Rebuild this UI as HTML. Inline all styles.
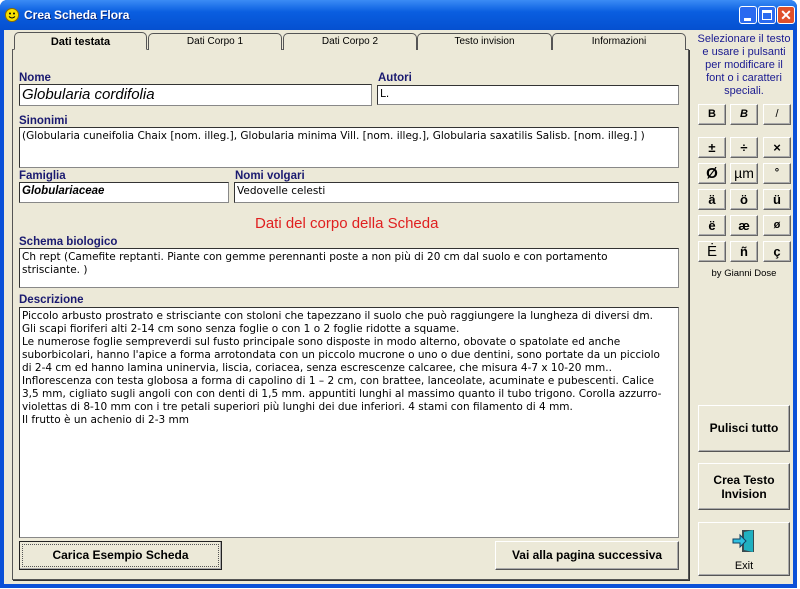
<!DOCTYPE html>
<html><head><meta charset="utf-8"><style>
*{box-sizing:border-box;margin:0;padding:0}
body{width:800px;height:589px;overflow:hidden;background:#fff;font-family:"Liberation Sans",sans-serif;position:relative}
.win{position:absolute;left:0;top:0;width:797px;height:588px;background:#0a50d8;border-radius:7px 7px 0 0}
.title{position:absolute;left:0;top:0;width:797px;height:30px;background:linear-gradient(#3b8cf5,#0a5ee0 40%,#0550d0);border-radius:7px 7px 0 0}
.title span{position:absolute;left:24px;top:8px;color:#fff;font-weight:bold;font-size:12px;text-shadow:1px 1px #0a2a80}
.client{position:absolute;left:4px;top:30px;width:789px;height:554px;background:#ece9d8}
.a{position:absolute}
.tb{position:absolute;background:#fff;border:1px solid #333;border-right-color:#888;border-bottom-color:#888;font-family:"DejaVu Sans",sans-serif;font-size:10.5px;color:#000;padding:2px 2px;white-space:nowrap;overflow:hidden}
.lb{position:absolute;font-weight:bold;font-size:11.5px;color:#1a1a70}
.tab{position:absolute;top:33px;height:17px;border:1px solid #555;border-bottom:none;border-radius:5px 5px 0 0;background:#ece9d8;font-size:10px;text-align:center;line-height:15px;color:#000}
.btn{position:absolute;background:#ece9d8;border:1px solid;border-color:#fff #555 #555 #fff;box-shadow:inset -1px -1px #aaa;font-size:12px;font-weight:bold;text-align:center;color:#000}
.sb{position:absolute;width:28px;height:21px;background:#ece9d8;border:1px solid;border-color:#fff #666 #666 #fff;box-shadow:inset -1px -1px #aaa;font-weight:bold;font-size:13px;text-align:center;line-height:19px}
</style></head><body>
<div class="win"></div>
<div class="title">
<svg class="a" style="left:5px;top:8px" width="14" height="14"><circle cx="7" cy="7" r="6.5" fill="#f6e000" stroke="#8a6a00"/><circle cx="5" cy="5.5" r="1" fill="#000"/><circle cx="9" cy="5.5" r="1" fill="#000"/><path d="M4 8.5 Q7 11.5 10 8.5" stroke="#000" fill="none"/></svg>
<span>Crea Scheda Flora</span>
<div class="a" style="left:739px;top:6px;width:18px;height:18px;background:#2a6af0;border:1px solid #fff;border-radius:3px"><div class="a" style="left:4px;top:11px;width:7px;height:3px;background:#fff"></div></div>
<div class="a" style="left:758px;top:6px;width:18px;height:18px;background:#2a6af0;border:1px solid #fff;border-radius:3px"><div class="a" style="left:3px;top:3px;width:10px;height:10px;border:1px solid #fff;border-top-width:3px"></div></div>
<div class="a" style="left:777px;top:6px;width:18px;height:18px;background:#e0502a;border:1px solid #fff;border-radius:3px;color:#fff;font-weight:bold;font-size:14px;text-align:center;line-height:16px">✕</div>
</div>
<div class="client"></div>
<div class="a" style="left:12px;top:49px;width:677px;height:531px;border:1px solid #555;border-top-color:#666;background:#ece9d8;box-shadow:1px 1px #333"></div>
<div class="tab" style="left:14px;width:133px;top:32px;height:18px;font-weight:bold;font-size:11px;line-height:18px;border-bottom:1px solid #ece9d8">Dati testata</div>
<div class="tab" style="left:148px;width:134px">Dati Corpo 1</div>
<div class="tab" style="left:283px;width:134px">Dati Corpo 2</div>
<div class="tab" style="left:417px;width:135px">Testo invision</div>
<div class="tab" style="left:552px;width:134px">Informazioni</div>

<div class="lb" style="left:19px;top:72px">Nome</div>
<div class="tb" style="left:19px;top:84px;width:353px;height:22px;font-family:'Liberation Sans',sans-serif;font-style:italic;font-size:15px;padding:1px 2px">Globularia cordifolia</div>
<div class="lb" style="left:378px;top:72px">Autori</div>
<div class="tb" style="left:377px;top:85px;width:302px;height:20px">L.</div>
<div class="lb" style="left:19px;top:115px">Sinonimi</div>
<div class="tb" style="left:19px;top:127px;width:660px;height:41px">(Globularia cuneifolia Chaix [nom. illeg.], Globularia minima Vill. [nom. illeg.], Globularia saxatilis Salisb. [nom. illeg.] )</div>
<div class="lb" style="left:19px;top:170px">Famiglia</div>
<div class="tb" style="left:19px;top:182px;width:210px;height:21px;font-family:'Liberation Sans',sans-serif;font-weight:bold;font-style:italic;font-size:11.5px">Globulariaceae</div>
<div class="lb" style="left:235px;top:170px">Nomi volgari</div>
<div class="tb" style="left:234px;top:182px;width:445px;height:21px">Vedovelle celesti</div>
<div class="a" style="left:255px;top:215px;color:#e02020;font-size:15px">Dati del corpo della Scheda</div>
<div class="lb" style="left:19px;top:236px">Schema biologico</div>
<div class="tb" style="left:19px;top:248px;width:660px;height:40px;line-height:13px">Ch rept (Camefite reptanti. Piante con gemme perennanti poste a non più di 20 cm dal suolo e con portamento<br>strisciante. )</div>
<div class="lb" style="left:19px;top:294px">Descrizione</div>
<div class="tb" style="left:19px;top:307px;width:660px;height:231px;line-height:13px">Piccolo arbusto prostrato e strisciante con stoloni che tapezzano il suolo che può raggiungere la lungheza di diversi dm.<br>Gli scapi fioriferi alti 2-14 cm sono senza foglie o con 1 o 2 foglie ridotte a squame.<br>Le numerose foglie sempreverdi sul fusto principale sono disposte in modo alterno, obovate o spatolate ed anche<br>suborbicolari, hanno l'apice a forma arrotondata con un piccolo mucrone o uno o due dentini, sono portate da un picciolo<br>di 2-4 cm ed hanno lamina uninervia, liscia, coriacea, senza escrescenze calcaree, che misura 4-7 x 10-20 mm..<br>Inflorescenza con testa globosa a forma di capolino di 1 – 2 cm, con brattee, lanceolate, acuminate e pubescenti. Calice<br>3,5 mm, cigliato sugli angoli con con denti di 1,5 mm. appuntiti lunghi al massimo quanto il tubo trigono. Corolla azzurro-<br>violettas di 8-10 mm con i tre petali superiori più lunghi dei due inferiori. 4 stami con filamento di 4 mm.<br>Il frutto è un achenio di 2-3 mm</div>
<div class="btn" style="left:19px;top:541px;width:203px;height:29px;line-height:27px;border:1px solid #222;outline:1px dotted #555;outline-offset:-4px">Carica Esempio Scheda</div>
<div class="btn" style="left:495px;top:541px;width:184px;height:29px;line-height:27px">Vai alla pagina successiva</div>

<div class="a" style="left:695px;top:33px;width:98px;text-align:center;color:#1a1a90;font-size:11px;line-height:13px">Selezionare il testo e usare i pulsanti per modificare il font o i caratteri speciali.</div>
<div class="sb" style="left:698px;top:104px;font-size:11px">B</div>
<div class="sb" style="left:730px;top:104px;font-size:11px;font-style:italic">B</div>
<div class="sb" style="left:763px;top:104px;font-size:11px;font-weight:normal">/</div>
<div class="sb" style="left:698px;top:137px">±</div>
<div class="sb" style="left:730px;top:137px">÷</div>
<div class="sb" style="left:763px;top:137px">×</div>
<div class="sb" style="left:698px;top:163px;font-size:15px">Ø</div>
<div class="sb" style="left:730px;top:163px;font-weight:normal;font-size:14px">µm</div>
<div class="sb" style="left:763px;top:163px;font-size:11px">°</div>
<div class="sb" style="left:698px;top:189px">ä</div>
<div class="sb" style="left:730px;top:189px">ö</div>
<div class="sb" style="left:763px;top:189px">ü</div>
<div class="sb" style="left:698px;top:215px">ë</div>
<div class="sb" style="left:730px;top:215px">æ</div>
<div class="sb" style="left:763px;top:215px;font-size:11px">ø</div>
<div class="sb" style="left:698px;top:241px;font-weight:normal;font-size:15px">Ė</div>
<div class="sb" style="left:730px;top:241px">ñ</div>
<div class="sb" style="left:763px;top:241px">ç</div>
<div class="a" style="left:695px;top:268px;width:98px;text-align:center;font-size:9.5px">by Gianni Dose</div>
<div class="btn" style="left:698px;top:405px;width:92px;height:47px;line-height:45px">Pulisci tutto</div>
<div class="btn" style="left:698px;top:463px;width:92px;height:47px;padding-top:9px;line-height:14px">Crea Testo<br>Invision</div>
<div class="btn" style="left:698px;top:522px;width:92px;height:54px;font-weight:normal;font-size:11px">
<svg class="a" style="left:32px;top:5px" width="26" height="26"><rect x="11" y="2" width="12" height="22" fill="#3a4a50"/><path d="M13 4 L22 2 L22 24 L13 22Z" fill="#20b0c0"/><path d="M2 11 H9 V7 L15 13 L9 19 V15 H2Z" fill="#30c0e0" stroke="#104060"/></svg>
<div class="a" style="left:0;top:37px;width:90px;text-align:center">Exit</div></div>
</body></html>
